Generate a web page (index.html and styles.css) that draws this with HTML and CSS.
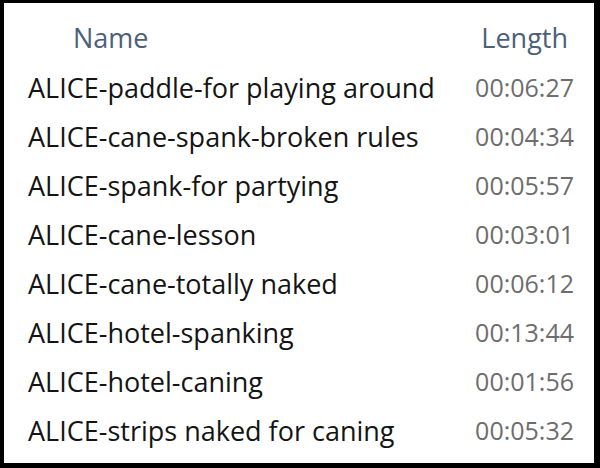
FILE: index.html
```html
<!DOCTYPE html>
<html>
<head>
<meta charset="utf-8">
<link rel="stylesheet" href="styles.css">
</head>
<body>
<div class="frame">
  <div class="list">
    <div class="head">
      <div class="h-name">Name</div>
      <div class="h-len">Length</div>
    </div>
    <div class="row"><span class="name">ALICE-paddle-for playing around</span><span class="len">00:06:27</span></div>
    <div class="row"><span class="name">ALICE-cane-spank-broken rules</span><span class="len">00:04:34</span></div>
    <div class="row"><span class="name">ALICE-spank-for partying</span><span class="len">00:05:57</span></div>
    <div class="row"><span class="name">ALICE-cane-lesson</span><span class="len">00:03:01</span></div>
    <div class="row"><span class="name">ALICE-cane-totally naked</span><span class="len">00:06:12</span></div>
    <div class="row"><span class="name">ALICE-hotel-spanking</span><span class="len">00:13:44</span></div>
    <div class="row"><span class="name">ALICE-hotel-caning</span><span class="len">00:01:56</span></div>
    <div class="row"><span class="name">ALICE-strips naked for caning</span><span class="len">00:05:32</span></div>
  </div>
</div>
</body>
</html>
```

FILE: styles.css
```css
html, body {
  margin: 0;
  padding: 0;
  background: #000;
}
.frame {
  width: 600px;
  height: 468px;
  box-sizing: border-box;
  padding: 3px 6px 5px 4px;
  background: #000;
}
.list {
  height: 100%;
  background: #fff;
  font-family: "Open Sans", "Noto Sans", sans-serif;
  font-size: 27px;
  color: #141414;
}
.head {
  display: flex;
  justify-content: space-between;
  height: 60px;
  box-sizing: border-box;
  padding: 21px 26px 0 69px;
  line-height: 27px;
  color: #4c607a;
}
.row {
  display: flex;
  justify-content: space-between;
  height: 49px;
  line-height: 49px;
  padding: 0 20px 0 24px;
}
.len {
  color: #6d6d6d;
  font-size: 25px;
}
```
